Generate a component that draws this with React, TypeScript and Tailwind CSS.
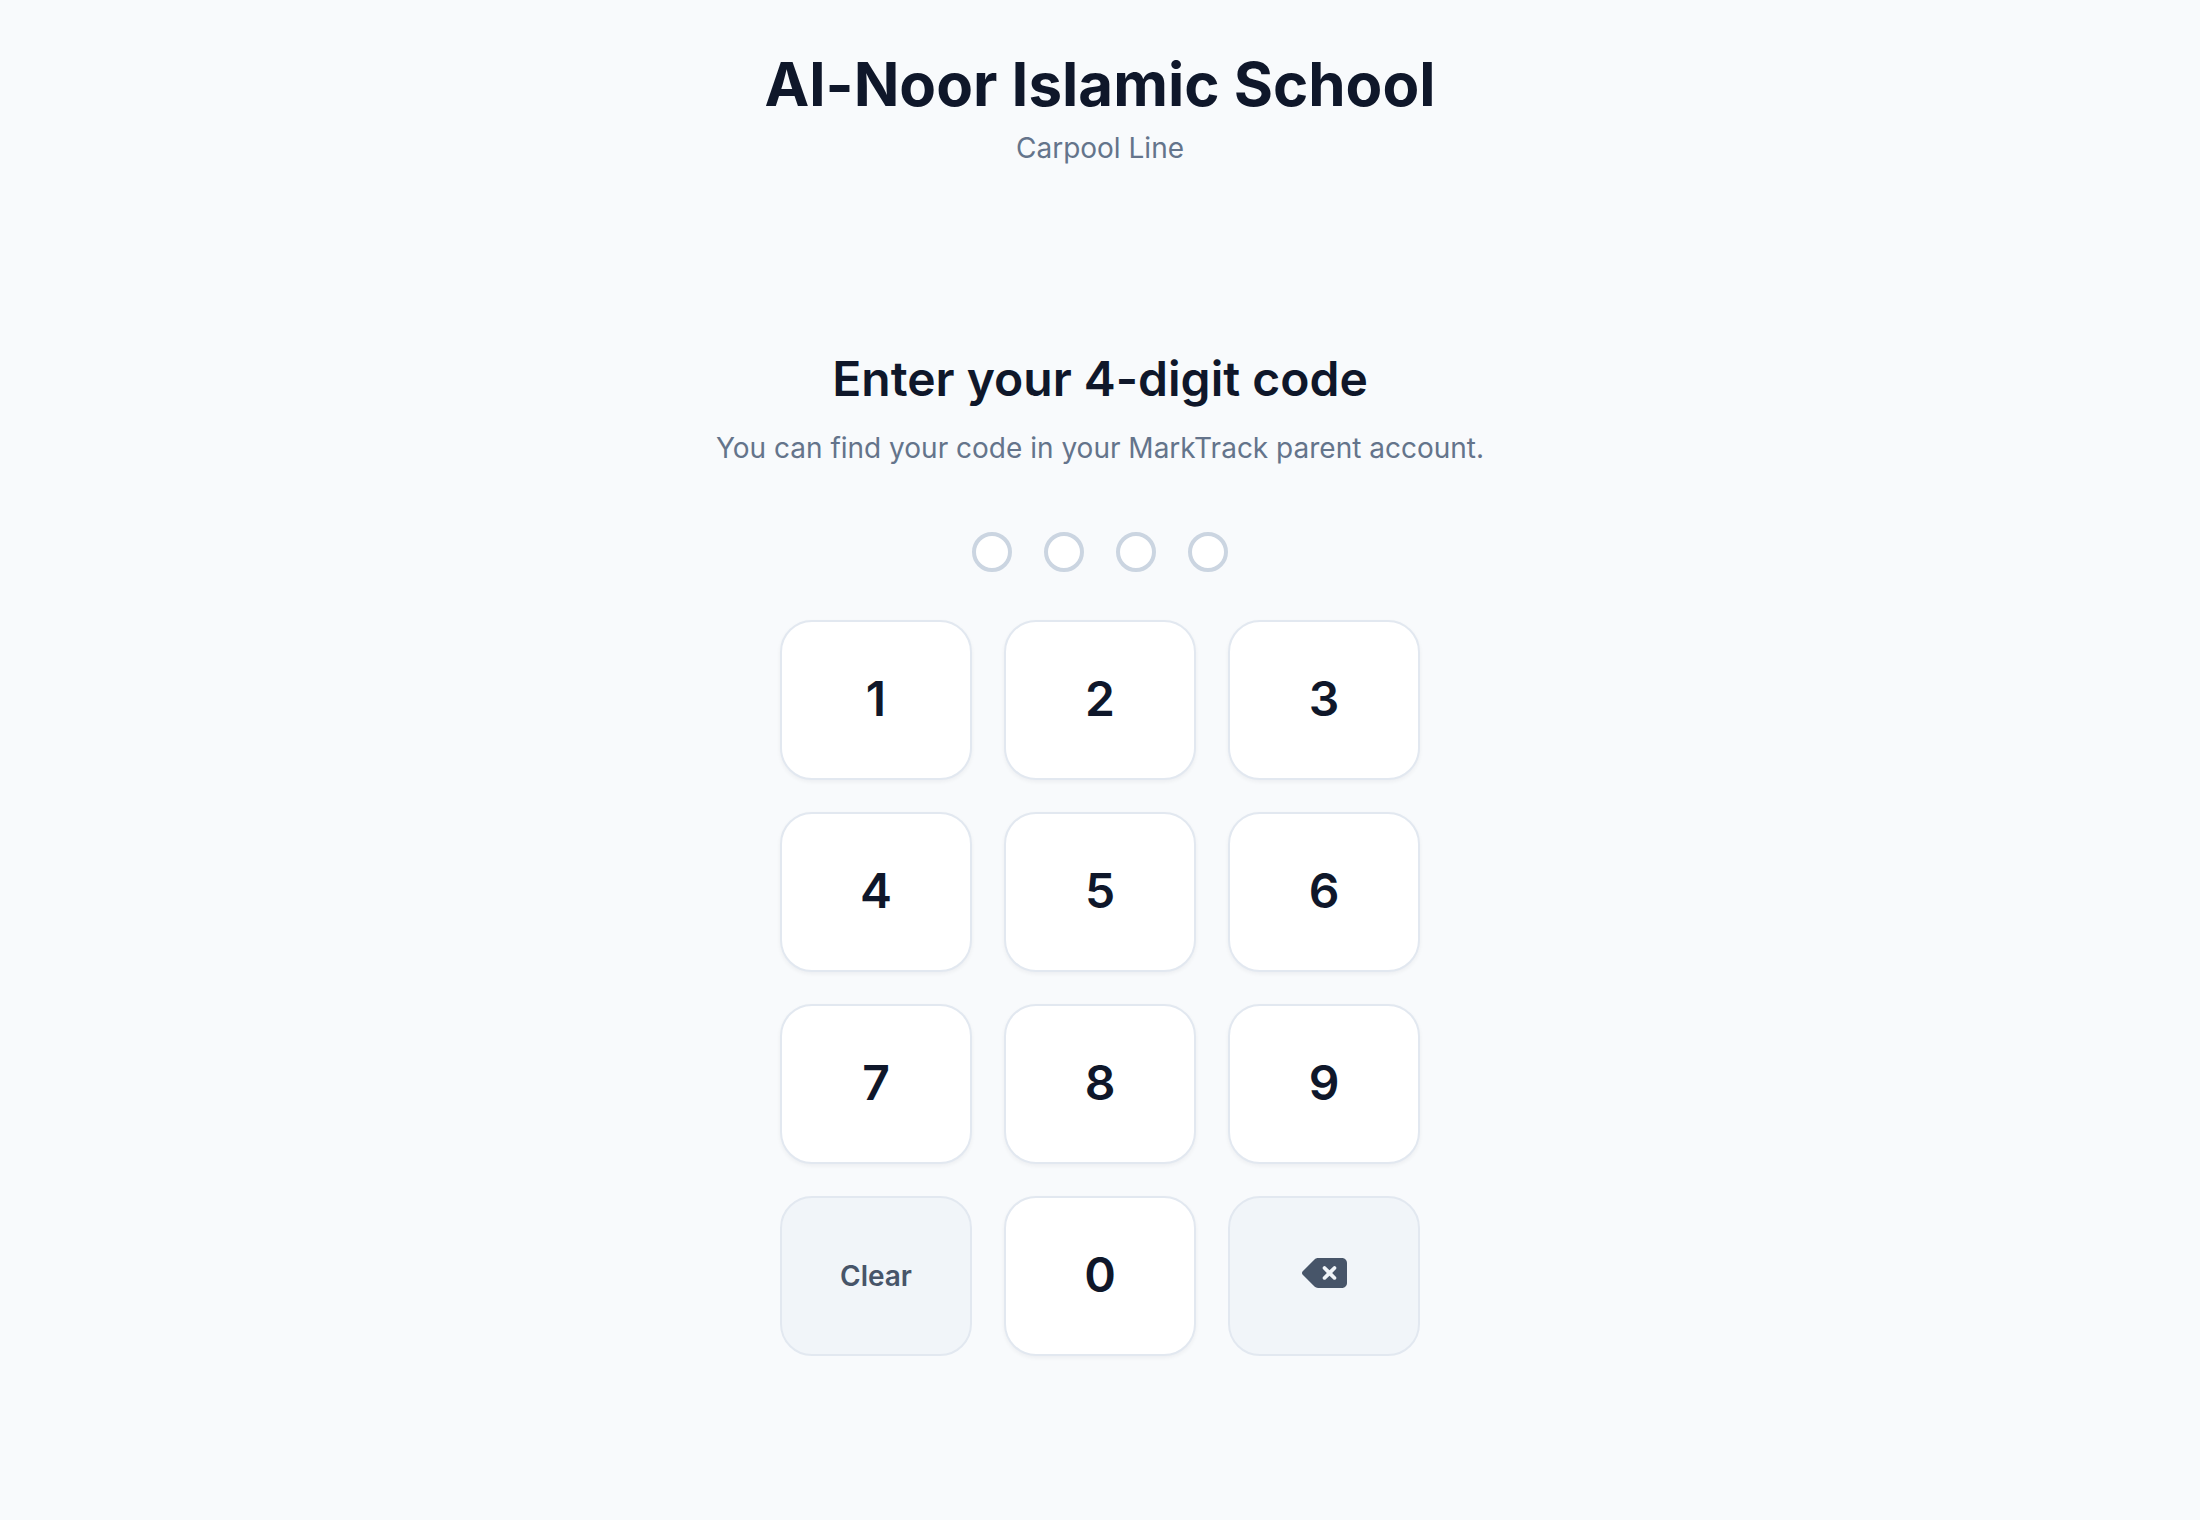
import { useState } from 'react'
import clsx from 'clsx'
import { FaDeleteLeft } from 'react-icons/fa6'

const CODE_LENGTH = 4
const DIGITS = ['1', '2', '3', '4', '5', '6', '7', '8', '9']

type KeyProps = {
  label: string
  variant?: 'digit' | 'action'
  onPress: () => void
  children: React.ReactNode
}

function Key({ label, variant = 'digit', onPress, children }: KeyProps) {
  return (
    <button
      type="button"
      aria-label={label}
      onClick={onPress}
      className={clsx(
        'flex h-40 items-center justify-center rounded-[32px] border-2 border-[#e2e8f0] font-semibold',
        variant === 'digit' && 'bg-white pb-0.5 text-5xl text-[#0f172a] shadow-[0_2px_4px_rgba(15,23,42,0.05)]',
        variant === 'action' && 'bg-[#f1f5f9] text-[28px] text-[#475569]'
      )}
    >
      {children}
    </button>
  )
}

function CodeDots({ filled }: { filled: number }) {
  return (
    <div className="mt-16 flex gap-8" role="status" aria-label={`${filled} of ${CODE_LENGTH} digits entered`}>
      {Array.from({ length: CODE_LENGTH }, (_, index) => (
        <span
          key={index}
          className={clsx(
            'size-10 rounded-full border-4',
            index < filled ? 'border-[#0f172a] bg-[#0f172a]' : 'border-[#cbd5e1] bg-white'
          )}
        />
      ))}
    </div>
  )
}

export default function App() {
  const [code, setCode] = useState('')

  const addDigit = (digit: string) =>
    setCode(current => (current.length < CODE_LENGTH ? current + digit : current))

  return (
    <div className="flex min-h-screen flex-col bg-[#f8fafc] font-[Inter,sans-serif] text-[#0f172a]">
      <header className="px-8 pt-12 pb-4 text-center">
        <h1 className="text-6xl leading-[72px] font-bold">Al-Noor Islamic School</h1>
        <p className="mt-2 text-[28px] leading-10 text-[#64748b]">Carpool Line</p>
      </header>

      <main className="flex flex-1 flex-col items-center justify-center px-8">
        <h2 className="text-center text-5xl leading-[62px] font-semibold">Enter your 4-digit code</h2>
        <p className="mt-[18px] text-center text-[28px] leading-10 text-[#64748b]">
          You can find your code in your MarkTrack parent account.
        </p>

        <CodeDots filled={code.length} />

        <div className="mt-12 grid w-full max-w-[640px] grid-cols-3 gap-8">
          {DIGITS.map(digit => (
            <Key key={digit} label={digit} onPress={() => addDigit(digit)}>
              {digit}
            </Key>
          ))}

          <Key label="Clear" variant="action" onPress={() => setCode('')}>
            Clear
          </Key>
          <Key label="0" onPress={() => addDigit('0')}>
            0
          </Key>
          <Key label="Delete" variant="action" onPress={() => setCode(current => current.slice(0, -1))}>
            <FaDeleteLeft className="mb-1.5 h-10 w-[45px]" />
          </Key>
        </div>
      </main>
    </div>
  )
}
